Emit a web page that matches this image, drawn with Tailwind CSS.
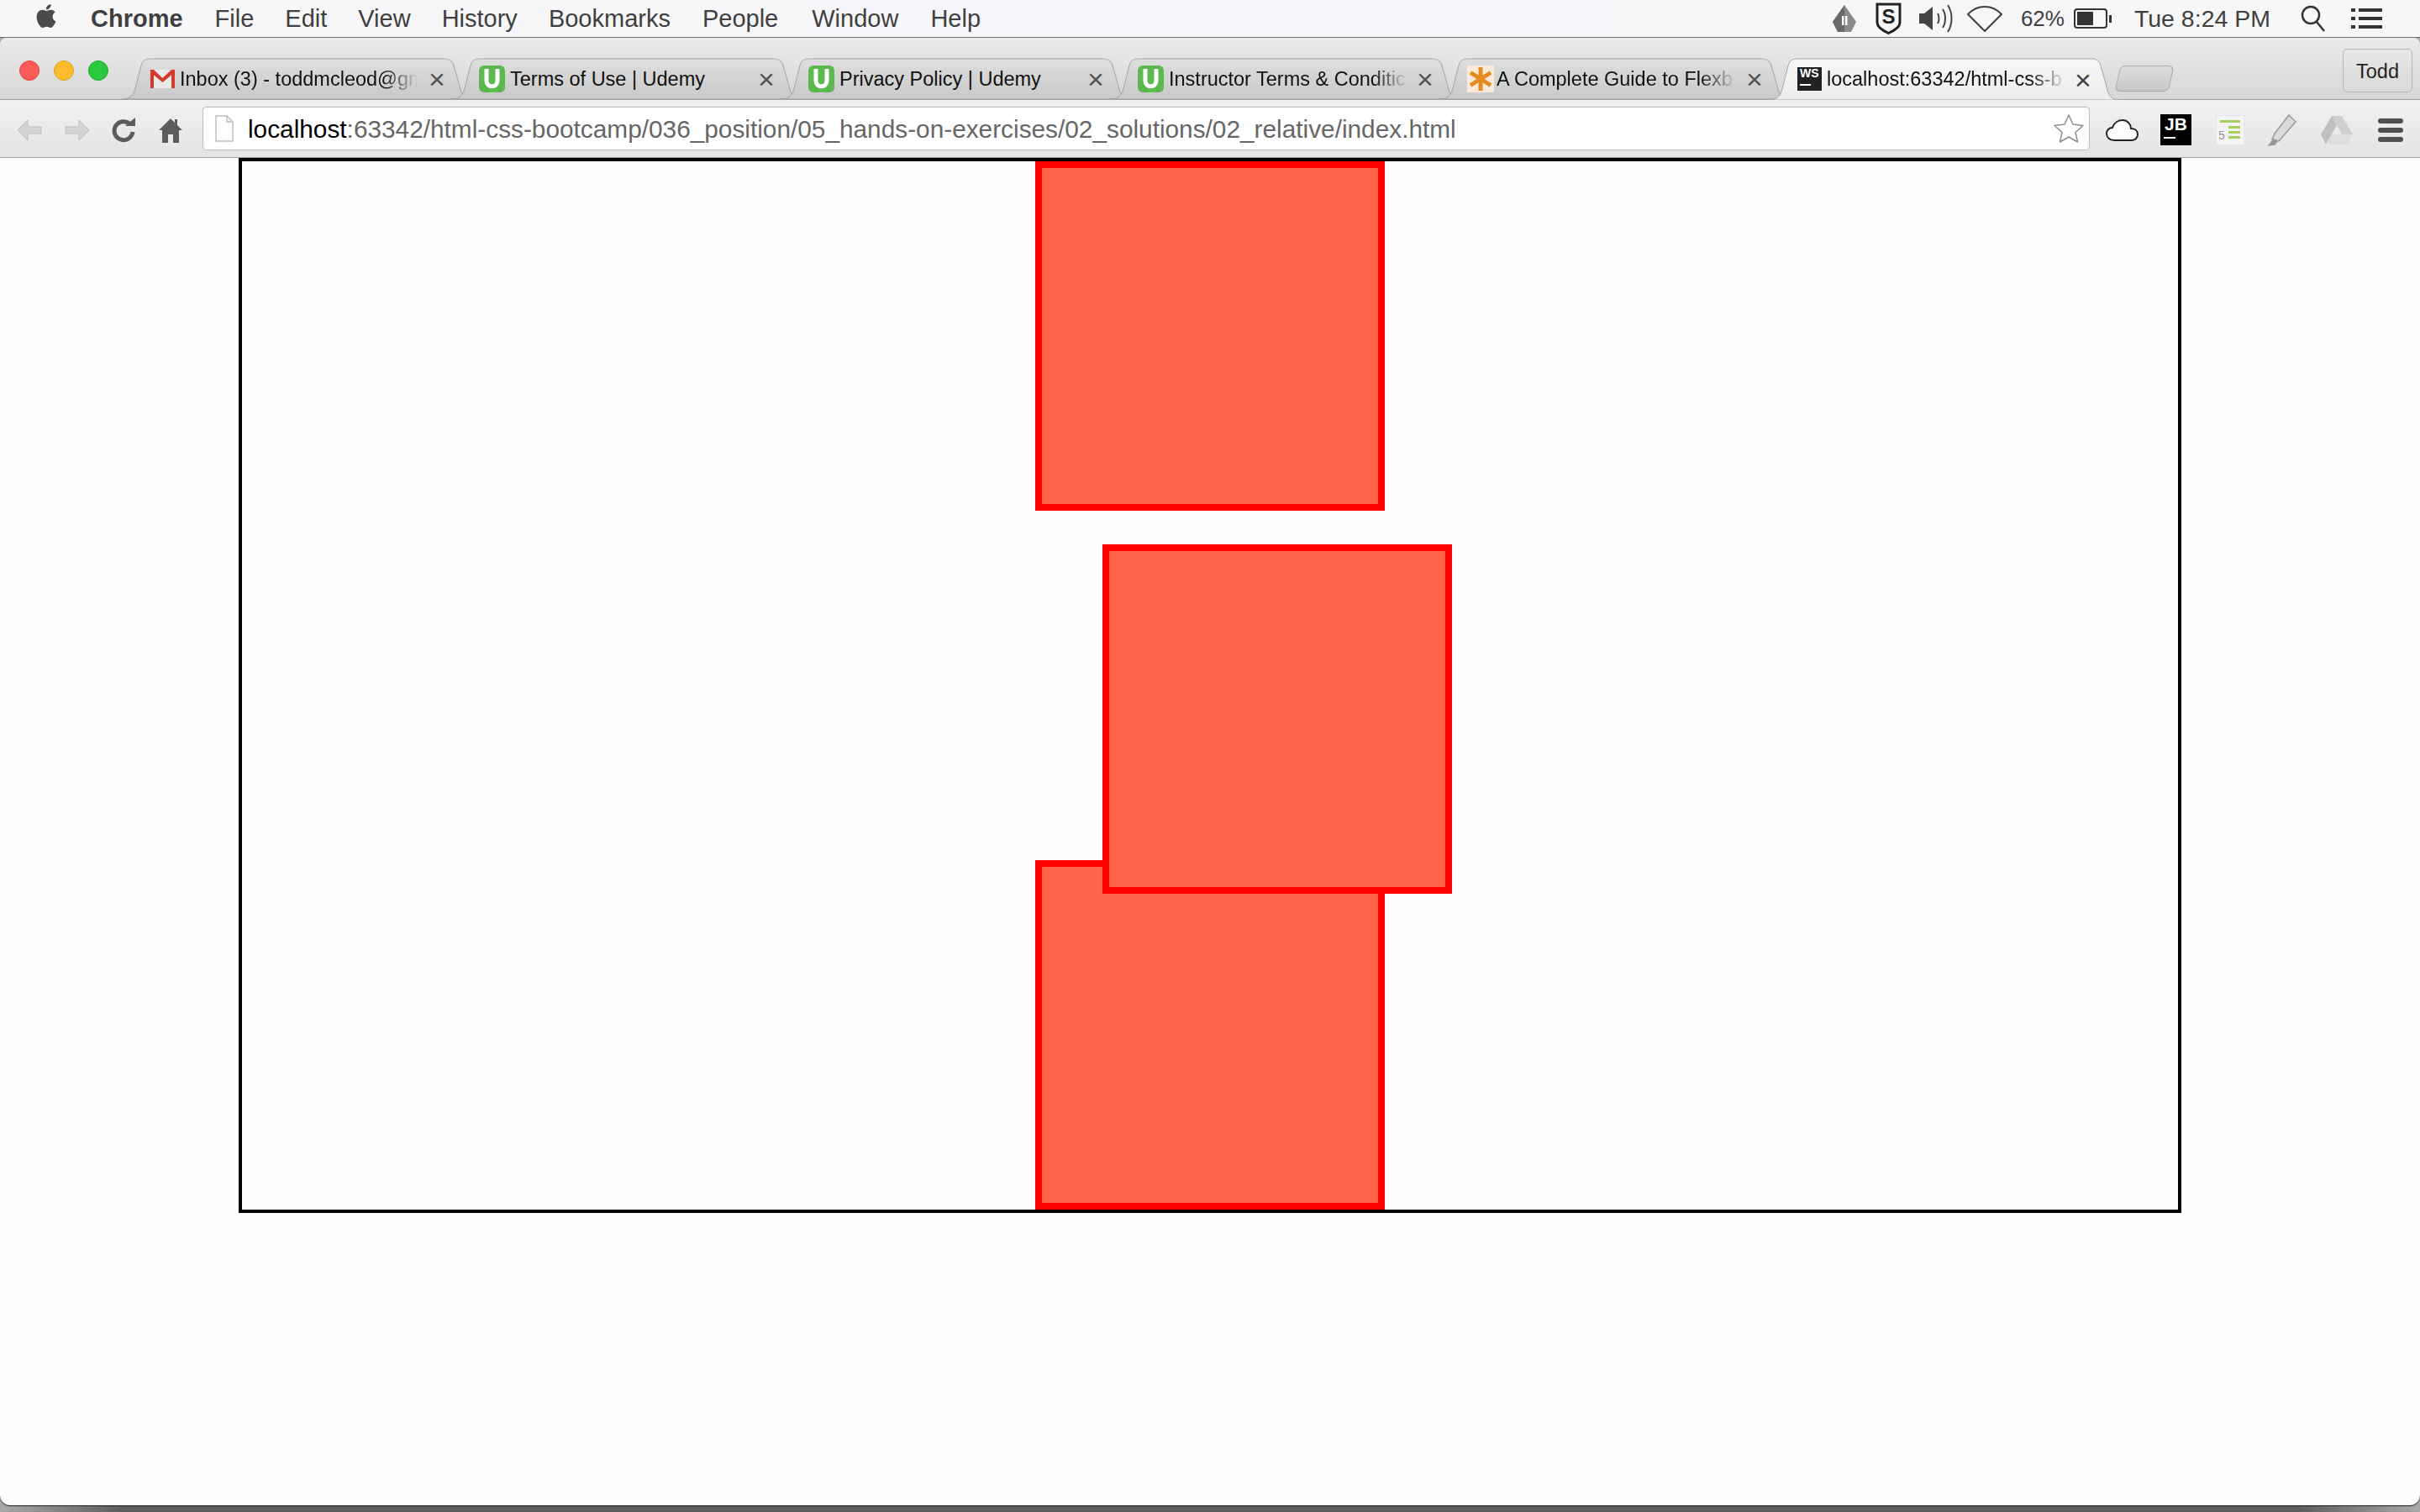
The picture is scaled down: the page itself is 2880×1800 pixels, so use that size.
<!DOCTYPE html>
<html lang="en">

<head>
  <meta charset="UTF-8" />
  <title>localhost:63342/html-css-bootcamp</title>
  <script src="https://cdn.jsdelivr.net/npm/@tailwindcss/browser@4"></script>
</head>

<body class="bg-[linear-gradient(to_right,#a8a8a8,#5e5e5e_5%,#5e5e5e_95%,#a8a8a8)] h-screen overflow-hidden font-['Liberation_Sans',Arial,sans-serif]">
  <svg class="absolute w-0 h-0">
    <defs>
      <linearGradient id="tabOff" x1="0" y1="0" x2="0" y2="1">
        <stop offset="0" stop-color="#dedede" />
        <stop offset="1" stop-color="#c9c9c9" />
      </linearGradient>
      <linearGradient id="tabOn" x1="0" y1="0" x2="0" y2="1">
        <stop offset="0" stop-color="#f6f6f6" />
        <stop offset="1" stop-color="#ededed" />
      </linearGradient>
      <symbol id="tabShape" viewBox="0 0 418 50" preserveAspectRatio="none">
        <path d="M0 50C10 50 14 45 16 37L23 9C25 3 28 1 35 1H383C390 1 393 3 395 9L403 38C405 46 409 50 418 50Z" />
      </symbol>
    </defs>
  </svg>

  <!-- menu bar -->
  <div class="h-[45px] flex items-center bg-[linear-gradient(to_right,#f7f7f7,#f6f6fb_50%,#f7f7f7)] border-b border-[#6e6e6e] text-[29px] leading-none text-[#3f3f3f] pl-[41px] pr-[45px]">
    <svg class="w-[28px] h-[32px] mr-[39px] mb-[6px]" viewBox="0 0 24 24" fill="#4a4a4a">
      <path d="M12.152 6.896c-.948 0-2.415-1.078-3.96-1.04-2.04.027-3.91 1.183-4.961 3.014-2.117 3.675-.546 9.103 1.519 12.09 1.013 1.454 2.208 3.09 3.792 3.039 1.52-.065 2.09-.987 3.935-.987 1.831 0 2.35.987 3.96.948 1.637-.026 2.676-1.48 3.676-2.948 1.156-1.688 1.636-3.325 1.662-3.415-.039-.013-3.182-1.221-3.22-4.857-.026-3.04 2.48-4.494 2.597-4.559-1.429-2.09-3.623-2.324-4.39-2.376-2-.156-3.675 1.09-4.61 1.09zM15.53 3.83c.843-1.012 1.4-2.427 1.245-3.83-1.207.052-2.662.805-3.532 1.818-.78.896-1.454 2.338-1.273 3.714 1.338.104 2.715-.688 3.559-1.701" />
    </svg>
    <span class="font-bold mr-[38px]">Chrome</span>
    <span class="mr-[37px]">File</span>
    <span class="mr-[37px]">Edit</span>
    <span class="mr-[37px]">View</span>
    <span class="mr-[37px]">History</span>
    <span class="mr-[38px]">Bookmarks</span>
    <span class="mr-[40px]">People</span>
    <span class="mr-[38px]">Window</span>
    <span>Help</span>

    <div class="ml-auto flex items-center">
      <svg class="w-[28px] h-[32px] mr-[23px]" viewBox="0 0 28 32">
        <path d="M14 0L0 20l6 12h16l6-12z" fill="#8a8a8a" />
        <path d="M14 0L0 20l6 12h8z" fill="#6a6a6a" />
        <rect x="11" y="13" width="2.5" height="11" fill="#fff" />
        <rect x="15" y="13" width="2.5" height="11" fill="#fff" />
      </svg>
      <div class="relative w-[31px] h-[38px] mr-[20px] flex items-center justify-center">
        <svg class="absolute inset-0" viewBox="0 0 31 38" fill="none">
          <path d="M2 2H29V24C29 30 21 34 15.500 36.500C10 34 2 30 2 24Z" stroke="#222" stroke-width="3" />
        </svg>
        <span class="relative text-[24px] font-bold text-[#222] mb-[5px]">S</span>
      </div>
      <svg class="w-[43px] h-[38px] mr-[15px]" viewBox="0 0 43 38" fill="none" stroke="#444" stroke-width="2">
        <path d="M1 13H7L17 5V33L7 25H1Z" fill="#444" stroke="none" />
        <path d="M23 13C25 16 25 22 23 25M29 8C33 14 33 24 29 30M35 3C41 12 41 26 35 35" />
      </svg>
      <svg class="w-[42px] h-[32px] mr-[22px]" viewBox="0 0 42 32" fill="none" stroke="#3f3f3f" stroke-width="2">
        <path d="M1 11C12 -1 30 -1 41 11L21 31Z" stroke-linejoin="round" />
      </svg>
      <span class="text-[26px] w-[63px]">62%</span>
      <div class="w-[40px] h-[24px] border-2 border-[#333] rounded-[4px] p-[2px] mr-[2px]">
        <div class="w-[60%] h-full bg-[#333]"></div>
      </div>
      <div class="w-[3px] h-[9px] bg-[#333] mr-[27px]"></div>
      <span class="text-[28.500px] mr-[36px]">Tue 8:24 PM</span>
      <svg class="w-[30px] h-[32px] mr-[30px]" viewBox="0 0 30 32" fill="none" stroke="#333" stroke-width="2.500">
        <circle cx="12" cy="12" r="10" />
        <path d="M19 20L28 31" />
      </svg>
      <svg class="w-[37px] h-[24px]" viewBox="0 0 37 24" fill="#333">
        <rect x="0" y="0" width="5" height="4" />
        <rect x="9" y="0" width="28" height="4" />
        <rect x="0" y="10" width="5" height="4" />
        <rect x="9" y="10" width="28" height="4" />
        <rect x="0" y="20" width="5" height="4" />
        <rect x="9" y="20" width="28" height="4" />
      </svg>
    </div>
  </div>

  <!-- browser window -->
  <div class="h-[1747px] rounded-b-[12px] rounded-t-[8px] overflow-hidden bg-[#fefefe] shadow-[0_1px_1px_#222] flex flex-col">
    <!-- tab strip -->
    <div class="h-[73px] shrink-0 flex items-end bg-[linear-gradient(#ebebeb,#d6d6d6)]">
      <div class="w-[171px] shrink-0 flex gap-[17px] pl-[23px] mb-[22px]">
        <span class="w-[24px] h-[24px] rounded-full bg-[#fc5b57] border border-[#e0443e]"></span>
        <span class="w-[24px] h-[24px] rounded-full bg-[#fdbb2e] border border-[#dea123]"></span>
        <span class="w-[24px] h-[24px] rounded-full bg-[#2ac83f] border border-[#1aab29]"></span>
      </div>

      <div class="relative w-[418px] h-[49px] shrink-0 -ml-[26px] flex items-center text-[23.500px] text-[#111]">
        <svg class="absolute inset-0 w-full h-full fill-[url(#tabOff)] stroke-[#a3a3a3]"><use href="#tabShape" /></svg>
        <svg class="relative ml-[34px] w-[29px] h-[22px] shrink-0" viewBox="0 0 29 22">
          <rect width="29" height="22" fill="#e9e9e9" />
          <path d="M0 0H4V22H0ZM25 0H29V22H25Z" fill="#d33b2c" />
          <path d="M0 0H4L14.500 10 25 0H29V3L14.500 15 0 3Z" fill="#d33b2c" />
        </svg>
        <span class="relative ml-[6px] pt-[2px] w-[292px] overflow-hidden whitespace-nowrap [mask-image:linear-gradient(to_right,black_83%,transparent_97%)]">Inbox (3) - toddmcleod@gm</span>
        <span class="absolute left-[365px] top-[5px] text-[34px] leading-[40px] text-[#555]">×</span>
      </div>

      <div class="relative w-[418px] h-[49px] shrink-0 -ml-[26px] flex items-center text-[23.500px] text-[#111]">
        <svg class="absolute inset-0 w-full h-full fill-[url(#tabOff)] stroke-[#a3a3a3]"><use href="#tabShape" /></svg>
        <svg class="relative ml-[33px] w-[31px] h-[32px] shrink-0" viewBox="0 0 31 32">
          <rect width="31" height="32" rx="6" fill="#5cb84f" />
          <path d="M9 4V18C9 27 22 27 22 18V4" fill="none" stroke="#fff" stroke-width="5" />
        </svg>
        <span class="relative ml-[6px] pt-[2px] w-[285px] overflow-hidden whitespace-nowrap">Terms of Use | Udemy</span>
        <span class="absolute left-[365px] top-[5px] text-[34px] leading-[40px] text-[#555]">×</span>
      </div>

      <div class="relative w-[418px] h-[49px] shrink-0 -ml-[26px] flex items-center text-[23.500px] text-[#111]">
        <svg class="absolute inset-0 w-full h-full fill-[url(#tabOff)] stroke-[#a3a3a3]"><use href="#tabShape" /></svg>
        <svg class="relative ml-[33px] w-[31px] h-[32px] shrink-0" viewBox="0 0 31 32">
          <rect width="31" height="32" rx="6" fill="#5cb84f" />
          <path d="M9 4V18C9 27 22 27 22 18V4" fill="none" stroke="#fff" stroke-width="5" />
        </svg>
        <span class="relative ml-[6px] pt-[2px] w-[285px] overflow-hidden whitespace-nowrap">Privacy Policy | Udemy</span>
        <span class="absolute left-[365px] top-[5px] text-[34px] leading-[40px] text-[#555]">×</span>
      </div>

      <div class="relative w-[418px] h-[49px] shrink-0 -ml-[26px] flex items-center text-[23.500px] text-[#111]">
        <svg class="absolute inset-0 w-full h-full fill-[url(#tabOff)] stroke-[#a3a3a3]"><use href="#tabShape" /></svg>
        <svg class="relative ml-[33px] w-[31px] h-[32px] shrink-0" viewBox="0 0 31 32">
          <rect width="31" height="32" rx="6" fill="#5cb84f" />
          <path d="M9 4V18C9 27 22 27 22 18V4" fill="none" stroke="#fff" stroke-width="5" />
        </svg>
        <span class="relative ml-[6px] pt-[2px] w-[285px] overflow-hidden whitespace-nowrap [mask-image:linear-gradient(to_right,black_85%,transparent)]">Instructor Terms &amp; Conditic</span>
        <span class="absolute left-[365px] top-[5px] text-[34px] leading-[40px] text-[#555]">×</span>
      </div>

      <div class="relative w-[418px] h-[49px] shrink-0 -ml-[26px] flex items-center text-[23.500px] text-[#111]">
        <svg class="absolute inset-0 w-full h-full fill-[url(#tabOff)] stroke-[#a3a3a3]"><use href="#tabShape" /></svg>
        <svg class="relative ml-[33px] w-[32px] h-[32px] shrink-0" viewBox="0 0 32 32">
          <rect width="32" height="32" fill="#fbe9d9" />
          <path d="M16 2V30M4 8.500L28 23.500M28 8.500L4 23.500" stroke="#e58a1f" stroke-width="5" />
        </svg>
        <span class="relative ml-[3px] pt-[2px] w-[285px] overflow-hidden whitespace-nowrap [mask-image:linear-gradient(to_right,black_85%,transparent)]">A Complete Guide to Flexb</span>
        <span class="absolute left-[365px] top-[5px] text-[34px] leading-[40px] text-[#555]">×</span>
      </div>

      <div class="relative z-10 w-[418px] h-[50px] -mb-px shrink-0 -ml-[26px] flex items-center text-[23.500px] text-[#111]">
        <svg class="absolute inset-0 w-full h-full fill-[url(#tabOn)] stroke-[#a3a3a3]"><use href="#tabShape" /></svg>
        <div class="relative ml-[34px] w-[29px] h-[28px] shrink-0 bg-[#222] text-white text-[14px] leading-[15px] font-bold pl-[3px]">WS<div class="w-[13px] h-[2px] bg-white mt-[5px]"></div></div>
        <span class="relative ml-[6px] pt-[2px] w-[285px] overflow-hidden whitespace-nowrap [mask-image:linear-gradient(to_right,black_85%,transparent)]">localhost:63342/html-css-b</span>
        <span class="absolute left-[364px] top-[6px] text-[34px] leading-[40px] text-[#444]">×</span>
      </div>

      <div class="w-[64px] h-[31px] shrink-0 -ml-[3px] mb-[9px] rounded-[6px] -skew-x-[12deg] bg-[linear-gradient(#dcdcdc,#c9c9c9)] border border-[#aaa]"></div>

      <div class="ml-auto mr-[9px] mb-[8px] w-[83px] h-[52px] pt-[4px] rounded-[5px] border border-[#b5b5b5] flex items-center justify-center text-[23.500px] text-[#222]">Todd</div>
    </div>

    <!-- toolbar -->
    <div class="h-[70px] shrink-0 flex items-center bg-[linear-gradient(#f1f1f1,#e4e4e4)] border-y border-y-[#a3a3a3]">
      <svg class="w-[32px] h-[28px] ml-[19px] mt-[3px]" viewBox="0 0 32 28" fill="#d3d3d3" stroke="#bdbdbd">
        <path d="M14 2L2 14 14 26V18H30V10H14Z" />
      </svg>
      <svg class="w-[32px] h-[28px] ml-[25px] mt-[3px]" viewBox="0 0 32 28" fill="#d3d3d3" stroke="#bdbdbd">
        <path d="M18 2L30 14 18 26V18H2V10H18Z" />
      </svg>
      <svg class="w-[28px] h-[30px] ml-[25px] mt-[3px]" viewBox="0 0 28 30" fill="none">
        <path d="M22 8A11 11 0 1 0 25 17" stroke="#5c5c5c" stroke-width="5" />
        <path d="M16 10H28V0Z" fill="#5c5c5c" />
      </svg>
      <svg class="w-[28px] h-[30px] ml-[28px] mt-[3px]" viewBox="0 0 28 30" fill="#5c5c5c">
        <path d="M14 1L0 15H4V30H11V20H17V30H24V15H28L22 9V2H19V6Z" />
      </svg>
      <div class="w-[2246px] h-[52px] ml-[24px] bg-white border border-[#bcbcbc] rounded-[4px] flex items-center text-[29.800px] text-[#666]">
        <svg class="w-[22px] h-[32px] ml-[14px] mr-[17px]" viewBox="0 0 22 32" fill="#fff" stroke="#bdbdbd" stroke-width="1.500">
          <path d="M1 1H14L21 8V31H1Z" />
          <path d="M14 1V8H21" fill="none" />
        </svg>
        <span class="whitespace-nowrap pt-[2px]"><span class="text-black">localhost</span>:63342/html-css-bootcamp/036_position/05_hands-on-exercises/02_solutions/02_relative/index.html</span>
        <svg class="w-[36px] h-[36px] ml-auto mr-[6px]" viewBox="0 0 36 36" fill="#fff" stroke="#8e8e8e" stroke-width="1.500">
          <path d="M18 2L23 13 35 14.500 26 22.500 28.500 34 18 28 7.500 34 10 22.500 1 14.500 13 13Z" stroke-linejoin="round" />
        </svg>
      </div>
      <svg class="w-[39px] h-[28px] ml-[19px] mt-[3px]" viewBox="0 0 39 28" fill="#fff" stroke="#222" stroke-width="2">
        <path d="M10 26C4 26 1 22 1 18 1 14 4 11 8 11 10 5 15 2 20 2 26 2 30 7 30 12 35 12 38 15 38 19 38 23 35 26 31 26Z" />
      </svg>
      <div class="w-[37px] h-[37px] ml-[26px] mt-[3px] bg-black text-white text-[21px] leading-[24px] font-bold text-center">JB<div class="w-[14px] h-[2px] bg-white ml-[4px] mt-[3px]"></div></div>
      <svg class="w-[34px] h-[36px] ml-[29px] mt-[3px]" viewBox="0 0 34 36">
        <rect width="34" height="36" fill="#f3f3f3" stroke="#ddd" />
        <path d="M5 6H29V9H5ZM15 13H29V16H15ZM15 19H29V22H15ZM15 25H29V28H15Z" fill="#a5cf5f" />
        <text x="3" y="29" font-size="14" fill="#999">5</text>
      </svg>
      <svg class="w-[36px] h-[40px] ml-[27px] mt-[3px]" viewBox="0 0 36 40" fill="#dadada" stroke="#999" stroke-width="1.500">
        <path d="M26 2L34 10 14 33 6 31 9 24Z" />
        <path d="M8 31L2 38 9 37 12 33Z" fill="#999" />
      </svg>
      <svg class="w-[38px] h-[36px] ml-[28px] mt-[3px]" viewBox="0 0 38 36">
        <path d="M13 1H25L38 23H25Z" fill="#cfcfcf" />
        <path d="M13 1L0 23 6 35 19 12Z" fill="#c0c0c0" />
        <path d="M6 35H32L38 23H13Z" fill="#dedede" />
      </svg>
      <div class="w-[30px] ml-[30px] mt-[3px] flex flex-col gap-[5px]">
        <span class="h-[6px] rounded-[3px] bg-[#4f4f4f]"></span>
        <span class="h-[6px] rounded-[3px] bg-[#4f4f4f]"></span>
        <span class="h-[6px] rounded-[3px] bg-[#4f4f4f]"></span>
      </div>
    </div>

    <!-- page content -->
    <div class="w-[2312px] mx-auto border-4 border-black">
      <div class="w-[416px] h-[416px] mx-auto border-8 border-[#f00] bg-[#ff6347]"></div>
      <div class="relative top-[40px] left-[80px] w-[416px] h-[416px] mx-auto border-8 border-[#f00] bg-[#ff6347] z-10"></div>
      <div class="w-[416px] h-[416px] mx-auto border-8 border-[#f00] bg-[#ff6347]"></div>
    </div>
  </div>
</body>

</html>
